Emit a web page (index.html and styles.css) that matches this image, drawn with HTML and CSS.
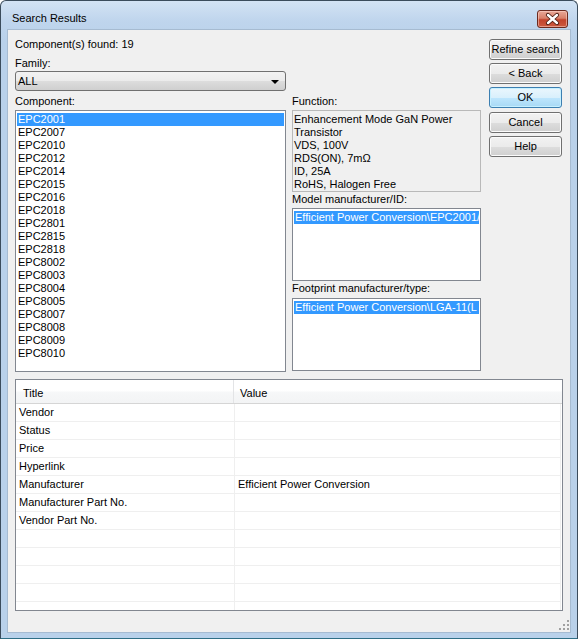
FILE: index.html
```html
<!DOCTYPE html>
<html>
<head>
<meta charset="utf-8">
<title>Search Results</title>
<link rel="stylesheet" href="styles.css">
</head>
<body>
<div class="window">
  <div class="titlebar">
    <span class="title">Search Results</span>
    <div class="close">
      <svg width="29" height="16" viewBox="0 0 29 16">
        <path d="M10 4 L19 12 M19 4 L10 12" stroke="#4a1c12" stroke-width="4.2" stroke-linecap="round"/>
        <path d="M10 4 L19 12 M19 4 L10 12" stroke="#ffffff" stroke-width="2.4" stroke-linecap="round"/>
      </svg>
    </div>
  </div>
  <div class="client">
    <div class="top">
      <div class="col-left">
        <div class="label">Component(s) found: 19</div>
        <div class="label family">Family:</div>
        <div class="combo"><span class="combo-text">ALL</span><span class="arrow"></span></div>
        <div class="label comp-label">Component:</div>
        <div class="listbox comp-list">
          <div class="item sel">EPC2001</div>
          <div class="item">EPC2007</div>
          <div class="item">EPC2010</div>
          <div class="item">EPC2012</div>
          <div class="item">EPC2014</div>
          <div class="item">EPC2015</div>
          <div class="item">EPC2016</div>
          <div class="item">EPC2018</div>
          <div class="item">EPC2801</div>
          <div class="item">EPC2815</div>
          <div class="item">EPC2818</div>
          <div class="item">EPC8002</div>
          <div class="item">EPC8003</div>
          <div class="item">EPC8004</div>
          <div class="item">EPC8005</div>
          <div class="item">EPC8007</div>
          <div class="item">EPC8008</div>
          <div class="item">EPC8009</div>
          <div class="item">EPC8010</div>
        </div>
      </div>
      <div class="col-mid">
        <div class="label">Function:</div>
        <div class="funcbox">
          <div class="fline">Enhancement Mode GaN Power</div>
          <div class="fline">Transistor</div>
          <div class="fline">VDS, 100V</div>
          <div class="fline">RDS(ON), 7mΩ</div>
          <div class="fline">ID, 25A</div>
          <div class="fline">RoHS, Halogen Free</div>
        </div>
        <div class="label model-label">Model manufacturer/ID:</div>
        <div class="listbox small-list">
          <div class="item sel">Efficient Power Conversion\EPC2001/(</div>
        </div>
        <div class="label fp-label">Footprint manufacturer/type:</div>
        <div class="listbox small-list fp-list">
          <div class="item sel">Efficient Power Conversion\LGA-11(L</div>
        </div>
      </div>
      <div class="col-btns">
        <div class="btn">Refine search</div>
        <div class="btn">&lt; Back</div>
        <div class="btn default">OK</div>
        <div class="btn cancel">Cancel</div>
        <div class="btn">Help</div>
      </div>
    </div>
    <div class="grid">
      <div class="ghead">
        <div class="hcell h1">Title</div>
        <div class="hcell h2">Value</div>
      </div>
      <div class="grow"><div class="c1">Vendor</div><div class="c2"></div></div>
      <div class="grow"><div class="c1">Status</div><div class="c2"></div></div>
      <div class="grow"><div class="c1">Price</div><div class="c2"></div></div>
      <div class="grow"><div class="c1">Hyperlink</div><div class="c2"></div></div>
      <div class="grow"><div class="c1">Manufacturer</div><div class="c2">Efficient Power Conversion</div></div>
      <div class="grow"><div class="c1">Manufacturer Part No.</div><div class="c2"></div></div>
      <div class="grow"><div class="c1">Vendor Part No.</div><div class="c2"></div></div>
      <div class="grow"><div class="c1"></div><div class="c2"></div></div>
      <div class="grow"><div class="c1"></div><div class="c2"></div></div>
      <div class="grow"><div class="c1"></div><div class="c2"></div></div>
      <div class="grow"><div class="c1"></div><div class="c2"></div></div>
      <div class="grow"><div class="c1"></div><div class="c2"></div></div>
    </div>
    <div class="grip">
      <span class="dot d1"></span><span class="dot d2"></span><span class="dot d3"></span>
      <span class="dot d4"></span><span class="dot d5"></span><span class="dot d6"></span>
    </div>
  </div>
</div>
</body>
</html>
```

FILE: styles.css
```css
* { box-sizing: border-box; }
html, body {
  margin: 0;
  padding: 0;
  background: #ffffff;
}
body {
  font-family: "Liberation Sans", Arial, sans-serif;
  font-size: 11px;
  color: #000;
}
.window {
  width: 578px;
  height: 639px;
  border: 1px solid #3b4c5c;
  border-bottom-color: #2f6f86;
  border-radius: 6px 6px 0 0;
  background: linear-gradient(to bottom, #d3e3f4 0px, #bfd5ed 20px, #b9d1ea 40px, #b9d1ea 100%);
  padding: 0 6px 6px 7px;
  display: flex;
  flex-direction: column;
}
.titlebar {
  height: 29px;
  display: flex;
  align-items: flex-start;
  justify-content: space-between;
  margin: 0 -6px 0 -7px;
  padding: 0 9px 0 11px;
}
.title {
  font-size: 11px;
  line-height: 13px;
  margin-top: 11px;
  color: #000;
}
.close {
  margin-top: 9px;
  width: 31px;
  height: 18px;
  border: 1px solid #6b2a1f;
  border-radius: 3px;
  background: linear-gradient(to bottom, #e8a898 0%, #d9806a 45%, #c2432c 55%, #cc5a40 100%);
  box-shadow: inset 0 0 0 1px rgba(255, 220, 210, 0.5);
  display: flex;
  align-items: center;
  justify-content: center;
}
.close svg { display: block; }
.client {
  position: relative;
  width: 562px;
  height: 602px;
  background: #f0f0f0;
  box-shadow: 0 0 0 1px #a6bbd1;
  padding: 8px 0 0 7px;
}
.top {
  display: flex;
  align-items: flex-start;
}
.label {
  line-height: 13px;
  height: 13px;
  white-space: nowrap;
}
.col-left { width: 271px; }
.family { margin-top: 6px; }
.combo {
  margin-top: 1px;
  height: 20px;
  border: 1px solid #707070;
  border-radius: 3px;
  background: linear-gradient(to bottom, #f2f2f2 0%, #ebebeb 50%, #dddddd 51%, #cfcfcf 100%);
  display: flex;
  align-items: center;
  justify-content: space-between;
  padding: 0 6px 0 2px;
}
.combo-text { line-height: 13px; }
.arrow {
  width: 0;
  height: 0;
  border-left: 4px solid transparent;
  border-right: 4px solid transparent;
  border-top: 4px solid #000;
  margin-top: 1px;
}
.comp-label { margin-top: 4px; }
.listbox {
  background: #fff;
  border: 1px solid #828790;
  padding: 2px 1px;
  overflow: hidden;
}
.comp-list {
  margin-top: 2px;
  height: 262px;
}
.item {
  height: 13px;
  line-height: 13px;
  padding-left: 1px;
  white-space: nowrap;
  overflow: hidden;
}
.item.sel {
  background: #3399ff;
  color: #fff;
}
.col-mid {
  width: 189px;
  margin-left: 6px;
  margin-top: 57px;
}
.funcbox {
  margin-top: 2px;
  height: 82px;
  border: 1px solid #b9b9b9;
  background: #f0f0f0;
  padding: 2px 0 0 1px;
  overflow: hidden;
}
.fline {
  line-height: 13px;
  height: 13px;
  white-space: nowrap;
}
.model-label { margin-top: 1px; }
.small-list {
  margin-top: 2px;
  height: 73px;
}
.fp-label { margin-top: 1px; }
.fp-list { margin-top: 3px; }
.col-btns {
  width: 73px;
  margin-left: 8px;
  margin-top: 1px;
  display: flex;
  flex-direction: column;
  gap: 3px;
}
.btn {
  height: 21px;
  border: 1px solid #707070;
  border-radius: 3px;
  background: linear-gradient(to bottom, #f2f2f2 0%, #ebebeb 50%, #dddddd 51%, #cfcfcf 100%);
  box-shadow: inset 0 0 0 1px #fbfbfb;
  display: flex;
  align-items: center;
  justify-content: center;
  white-space: nowrap;
  line-height: 13px;
}
.btn.default {
  border-color: #3c7fb1;
  background: linear-gradient(to bottom, #eaf6fd 0%, #d9f0fc 50%, #bee6fd 51%, #a7d9f5 100%);
  box-shadow: inset 0 0 0 1px #c6f0ff;
}
.btn.cancel { margin-top: 1px; }
.grid {
  margin-top: 7px;
  width: 548px;
  height: 232px;
  border: 1px solid #828790;
  background: #fff;
  overflow: hidden;
}
.ghead {
  display: flex;
  height: 24px;
  border-bottom: 1px solid #d5d5d5;
  background: linear-gradient(to bottom, #ffffff 0%, #ffffff 45%, #f6f7f8 55%, #f3f4f5 100%);
}
.hcell {
  line-height: 13px;
  padding-top: 7px;
  white-space: nowrap;
}
.h1 {
  width: 218px;
  padding-left: 7px;
  border-right: 1px solid #e3e4e6;
}
.h2 {
  flex: 1;
  padding-left: 6px;
}
.grow {
  display: flex;
  width: 545px;
  height: 18px;
}
.c1, .c2 {
  height: 18px;
  line-height: 17px;
  padding-left: 3px;
  border-bottom: 1px solid #efefef;
  border-right: 1px solid #efefef;
  white-space: nowrap;
}
.c1 { width: 219px; }
.c2 { flex: 1; }
.grip {
  position: absolute;
  right: 1px;
  bottom: 2px;
  width: 10px;
  height: 10px;
}
.dot {
  position: absolute;
  width: 2px;
  height: 2px;
  background: #a0a0a0;
}
.d1 { left: 8px; top: 0px; }
.d2 { left: 4px; top: 4px; }
.d3 { left: 8px; top: 4px; }
.d4 { left: 0px; top: 8px; }
.d5 { left: 4px; top: 8px; }
.d6 { left: 8px; top: 8px; }
```
